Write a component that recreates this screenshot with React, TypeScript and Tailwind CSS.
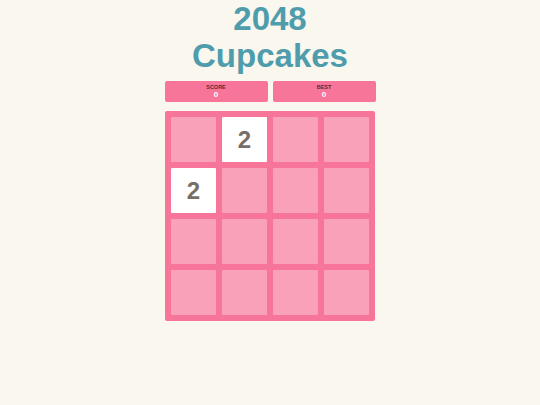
import React from "react";

const grid = [
  [0, 2, 0, 0],
  [2, 0, 0, 0],
  [0, 0, 0, 0],
  [0, 0, 0, 0],
];

function ScoreBox({ label, value }: { label: string; value: number }) {
  return (
    <div className="flex-1 h-[21px] bg-[#f67598] rounded-[2px] flex flex-col items-center justify-center leading-none pt-[1px]">
      <div className="text-[5.5px] font-bold text-[#5a2a36] uppercase">{label}</div>
      <div className="text-[8px] font-bold text-white mt-[1px]">{value}</div>
    </div>
  );
}

export default function App() {
  return (
    <div
      className="w-[540px] h-[405px] bg-[#faf7ef] flex flex-col items-center"
      style={{ fontFamily: '"Liberation Sans", Arial, sans-serif' }}
    >
      <h1 className="text-[33px] font-bold text-[#4f9dac] text-center leading-[37px]">
        2048
        <br />
        Cupcakes
      </h1>
      <div className="w-[211px] flex gap-[5px] mt-[7px]">
        <ScoreBox label="Score" value={0} />
        <ScoreBox label="Best" value={0} />
      </div>
      <div className="w-[210px] h-[210px] mt-[9px] bg-[#f67598] rounded-[2px] p-[6px] grid grid-cols-4 grid-rows-4 gap-[6px]">
        {grid.flat().map((v, i) => (
          <div
            key={i}
            className={
              v
                ? "bg-white rounded-[1px] flex items-center justify-center text-[24px] font-bold text-[#776e65]"
                : "bg-[#f8a1b9] rounded-[1px]"
            }
          >
            {v ? v : null}
          </div>
        ))}
      </div>
    </div>
  );
}
